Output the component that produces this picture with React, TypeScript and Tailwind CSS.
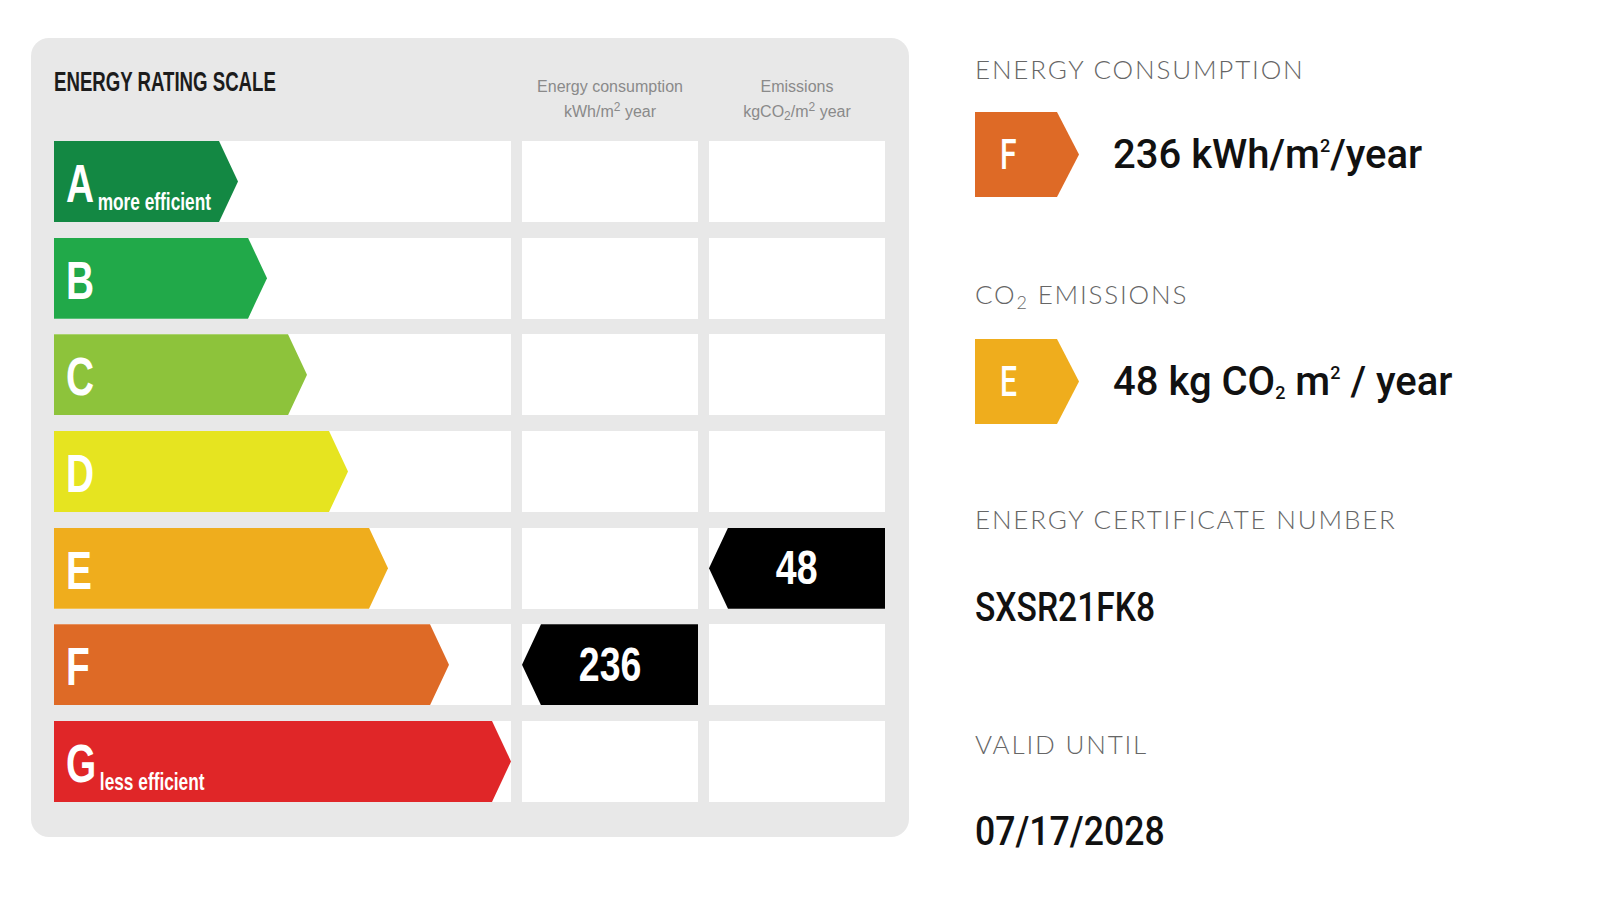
import type { ReactNode } from 'react';

type Row = {
  letter: string;
  note?: string;
  bar: string;
  energy?: string;
  emissions?: string;
};

const rows: Row[] = [
  { letter: 'A', note: 'more efficient', bar: 'w-[184px] bg-[#138843]' },
  { letter: 'B', bar: 'w-[213px] bg-[#21a949]' },
  { letter: 'C', bar: 'w-[253px] bg-[#8dc33b]' },
  { letter: 'D', bar: 'w-[294px] bg-[#e6e420]' },
  { letter: 'E', bar: 'w-[334px] bg-[#efad1d]', emissions: '48' },
  { letter: 'F', bar: 'w-[395px] bg-[#de6a26]', energy: '236' },
  { letter: 'G', note: 'less efficient', bar: 'w-[457px] bg-[#e02628]' },
];

const ValueCell = ({ value }: { value?: string }) => (
  <div className="w-[176px] bg-white">
    {value && (
      <div className="flex h-full items-center justify-center bg-black [clip-path:polygon(19px_0,100%_0,100%_100%,19px_100%,0_50%)]">
        <span className="inline-block scale-x-[0.78] text-[48px] font-bold leading-none text-white">
          {value}
        </span>
      </div>
    )}
  </div>
);

const RatingScale = () => (
  <section className="w-[878px] shrink-0 rounded-[18px] bg-[#e8e8e8] pt-[31px] pb-[35px] pl-[23px] pr-[24px] font-['Liberation_Sans',Arial,sans-serif]">
    <div className="flex h-[72px] gap-[11px]">
      <h2 className="w-[457px] text-[27px] font-bold leading-none text-[#1c1c1c]">
        <span className="inline-block origin-left scale-x-[0.69] whitespace-nowrap">ENERGY RATING SCALE</span>
      </h2>
      <div className="mt-[5px] w-[176px] text-center text-[16px] leading-[25px] text-[#8a8a8a]">
        Energy consumption
        <br />
        kWh/m<sup>2</sup> year
      </div>
      <div className="mt-[5px] w-[176px] text-center text-[16px] leading-[25px] text-[#8a8a8a]">
        Emissions
        <br />
        kgCO<sub>2</sub>/m<sup>2</sup> year
      </div>
    </div>

    <div className="flex flex-col gap-[15.67px]">
      {rows.map((r) => (
        <div key={r.letter} className="flex h-[81px] gap-[11px]">
          <div className="w-[457px] bg-white">
            <div
              className={`h-full ${r.bar} pl-[12px] pt-[15px] [clip-path:polygon(0_0,calc(100%_-_19px)_0,100%_50%,calc(100%_-_19px)_100%,0_100%)]`}
            >
              <span className="inline-block origin-left scale-x-[0.72] whitespace-nowrap text-[54px] font-bold leading-none text-white">
                {r.letter}
                {r.note && <span className="ml-[5px] align-[-8px] text-[24px]">{r.note}</span>}
              </span>
            </div>
          </div>
          <ValueCell value={r.energy} />
          <ValueCell value={r.emissions} />
        </div>
      ))}
    </div>
  </section>
);

const Label = ({ children, className = '' }: { children: ReactNode; className?: string }) => (
  <h3
    className={`font-['Lato',sans-serif] text-[26px] font-light leading-none tracking-[0.07em] whitespace-nowrap text-[#666] ${className}`}
  >
    {children}
  </h3>
);

const Badge = ({ letter, color }: { letter: string; color: string }) => (
  <div
    className={`flex h-[85px] w-[104px] shrink-0 items-center pl-[25px] ${color} [clip-path:polygon(0_0,82px_0,100%_50%,82px_100%,0_100%)]`}
  >
    <span className="inline-block origin-left scale-x-[0.7] text-[43px] font-medium leading-none text-white">
      {letter}
    </span>
  </div>
);

const Summary = () => (
  <aside className="flex flex-col pt-[18px] font-['Roboto',sans-serif] text-[#111]">
    <Label>ENERGY CONSUMPTION</Label>
    <div className="mt-[30px] flex items-center gap-[34px]">
      <Badge letter="F" color="bg-[#de6a26]" />
      <span className="whitespace-nowrap text-[40px] font-medium leading-none">
        236 kWh/m<sup className="-top-4 text-[18px]">2</sup>/year
      </span>
    </div>

    <Label className="mt-[84px]">
      CO<sub className="text-[18px]">2</sub> EMISSIONS
    </Label>
    <div className="mt-[32px] flex items-center gap-[34px]">
      <Badge letter="E" color="bg-[#efad1d]" />
      <span className="whitespace-nowrap text-[40px] font-medium leading-none">
        48 kg CO<sub className="text-[18px]">2</sub> m<sup className="-top-4 text-[18px]">2</sup> / year
      </span>
    </div>

    <Label className="mt-[82px]">ENERGY CERTIFICATE NUMBER</Label>
    <div className="mt-[56px] text-[40px] font-medium leading-none">
      <span className="inline-block origin-left scale-x-[0.84]">SXSR21FK8</span>
    </div>

    <Label className="mt-[103px]">VALID UNTIL</Label>
    <div className="mt-[55px] text-[40px] font-medium leading-none">
      <span className="inline-block origin-left scale-x-[0.89]">07/17/2028</span>
    </div>
  </aside>
);

export default function App() {
  return (
    <div className="flex min-h-screen w-full items-start gap-[66px] bg-white pt-[38px] pl-[31px]">
      <RatingScale />
      <Summary />
    </div>
  );
}
